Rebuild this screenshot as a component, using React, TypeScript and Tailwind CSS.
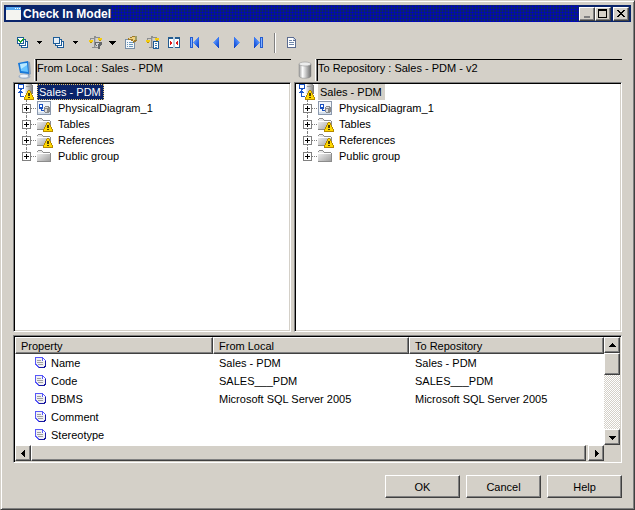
import React, { useState } from "react";

const raised =
  "border border-t-white border-l-white border-r-[#404040] border-b-[#404040] bg-[#d4d0c8] shadow-[inset_-1px_-1px_0_#808080]";
const sunken =
  "border border-t-[#808080] border-l-[#808080] border-r-white border-b-white p-px shadow-[inset_1px_1px_0_#000,inset_-1px_-1px_0_#d4d0c8]";

function Svg({ w = 16, h = 16, children }: { w?: number; h?: number; children: React.ReactNode }) {
  return (
    <svg width={w} height={h} viewBox={`0 0 ${w} ${h}`} shapeRendering="crispEdges" aria-hidden="true" className="block shrink-0">
      {children}
    </svg>
  );
}

function Warning() {
  return (
    <g>
      <path d="M11 6h2v1h1v2h1v2h1v2h1v3H7v-3h1v-2h1V9h1V7h1z" fill="#b48800" />
      <path d="M11 7h2v2h1v2h1v2h1v2H8v-2h1v-2h1V9h1z" fill="#ffd800" />
      <path d="M11 9h2v3h-2zM11 13h2v1h-2z" fill="#504000" />
    </g>
  );
}

function RootIcon() {
  return (
    <Svg w={17}>
      <defs>
        <linearGradient id="cyl">
          <stop offset="0" stopColor="#f4f4f4" />
          <stop offset="1" stopColor="#777" />
        </linearGradient>
      </defs>
      <path d="M9 0h6v1h1v9H8V1h1z" fill="url(#cyl)" />
      <path d="M9 2h6v1H9z" fill="#999" />
      <rect x="1.500" y="0.500" width="5" height="4" fill="#fff" stroke="#174fc0" />
      <path d="M1 0h6v1H1zM3 5h2v1H3zM3 6h1v6h3v1H3zM2 7h3v1H2zM1 8h5v1H1z" fill="#1d58c8" />
      <Warning />
    </Svg>
  );
}

function DiagramIcon() {
  return (
    <Svg>
      <rect x="1.500" y="1.500" width="13" height="13" fill="#f2f6fb" stroke="#8b98ac" />
      <path d="M2 12h12v2H2z" fill="#d3deeb" />
      <rect x="3.500" y="4.500" width="3" height="3" fill="#fff" stroke="#174fc0" />
      <path d="M5 8h1v2h2v1H5zM3 8h4v1H3z" fill="#174fc0" />
      <path d="M9 6h4v1h1v5h-1v1H9v-1H8V7h1z" fill="#8a8a8a" />
      <path d="M9 7h3v1H9zM9 9h2v3H9z" fill="#dcdcdc" />
    </Svg>
  );
}

function FolderIcon({ warn }: { warn?: boolean }) {
  return (
    <Svg w={17}>
      <defs>
        <linearGradient id="fold" x2="1" y2="1">
          <stop offset="0" stopColor="#fafafa" />
          <stop offset="1" stopColor="#a0a0a0" />
        </linearGradient>
      </defs>
      <path d="M1 3h1V2h4v1h1v1h7v1h1v9H1z" fill="#8c8c8c" />
      <path d="M2 3h4v1h1v1h7v8H1V4h1z" fill="url(#fold)" />
      <path d="M1 5h13v1H1z" fill="#fff" />
      {warn && <Warning />}
    </Svg>
  );
}

function PropIcon() {
  return (
    <Svg w={12} h={12}>
      <path d="M0 0h8v1h1v1h1v1h1v7h-1v1H3v-1H2V9H1V8H0z" fill="#5858f8" />
      <path d="M1 1h6v3h3v5H9v1H4V9H3V8H2V7H1z" fill="#f0f0f4" />
      <path d="M8 2h1v1h1v1H8z" fill="#fff" />
      <path d="M2 3h4v1H2zM2 5h6v1H2zM3 7h5v1H3z" fill="#a0a0a0" />
      <path d="M10 4h1v6h-1v1H4v-1h5V9h1z" fill="#1818a0" />
    </Svg>
  );
}

function Stack({ check }: { check?: boolean }) {
  return (
    <Svg>
      <g fill="#fff" stroke="#1c5c98">
        <rect x="5.500" y="6.500" width="6" height="6" />
        <rect x="3.500" y="4.500" width="6" height="6" />
        <rect x="1.500" y="2.500" width="6" height="6" fill={check ? "#fff" : "#e4eef6"} />
      </g>
      {check && <path d="M2 4h1v1h1v1h1V5h1V4h1V3h1v2H7v1H6v1H5v1H4V7H3V6H2z" fill="#18a028" />}
    </Svg>
  );
}

function Scale({ mode }: { mode: "filter" | "doc" }) {
  return (
    <Svg>
      <path d="M6 1h2v1h4v1H8v9h2v1H4v-1h2V4H3v1H2V3h4z" fill="#8c8e90" />
      <path d="M7 3h1v9H7z" fill="#b8babc" />
      <path d="M2 5h2v1h1v1H4v1H2V7H1V6h1zM11 3h2v1h1v1h-1v1h-2V5h-1V4h1z" fill="#c09400" />
      <path d="M1 5h4v2H1zM10 3h4v2h-4z" fill="#f4cc10" />
      {mode === "filter" ? (
        <>
          <path d="M7 7h7v3h-1v1h-1v3h-2v-2H9v-1H8v-1H7z" fill="#66696c" />
          <path d="M8 8h3v1h-1v3H9v-2H8z" fill="#d4d6d8" />
        </>
      ) : (
        <>
          <path d="M8 6h6v8H8z" fill="#1c5c98" />
          <path d="M9 7h4v6H9z" fill="#fff" />
          <path d="M10 8h2v1h-2zM10 10h2v1h-2zM10 12h2v1h-2z" fill="#4080b0" />
        </>
      )}
    </Svg>
  );
}

function PropertiesIcon() {
  return (
    <Svg>
      <path d="M1 4h10v10H1z" fill="#7890a8" />
      <path d="M2 5h8v8H2z" fill="#f4f8fb" />
      <path d="M3 7h1v1H3zM5 7h4v1H5zM3 9h1v1H3zM5 9h4v1H5zM3 11h1v1H3zM5 11h4v1H5z" fill="#6a98bc" />
      <path d="M4 3h2V2h2V1h5v5h-1v1h-2v1H9V6H7V5H4z" fill="#9d7a2c" />
      <path d="M5 3h3V2h3v3h-1v1H9V4H5z" fill="#f1d27c" />
      <path d="M11 1h2v4h-2z" fill="#9c9c6a" />
    </Svg>
  );
}

function CompareIcon() {
  return (
    <Svg>
      <path d="M2 2h12v11H2z" fill="#245c90" />
      <path d="M3 4h4v8H3zM9 4h4v8H9z" fill="#fff" />
      <path d="M4 6h1v1h1v2H5v1H4zM12 6h-1v1h-1v2h1v1h1z" fill="#e01818" />
      <path d="M7 2h2v11H7z" fill="#bed2e2" />
    </Svg>
  );
}

function NavIcon({ dir, bar }: { dir: "l" | "r"; bar?: boolean }) {
  return (
    <Svg>
      <defs>
        <linearGradient id="nav" x2="1" y2="1">
          <stop offset="0" stopColor="#9ac4ff" />
          <stop offset="0.600" stopColor="#2c6cec" />
          <stop offset="1" stopColor="#0c3cbc" />
        </linearGradient>
      </defs>
      <g transform={dir === "r" ? "translate(16 0) scale(-1 1)" : undefined}>
        <path d="M10 2h1v11h-1v-1H9v-1H8v-1H7V9H6V8H5V7h1V6h1V5h1V4h1V3h1z" fill="url(#nav)" transform={bar ? "translate(1 0)" : undefined} />
        {bar && <path d="M3 2h3v11H3z" fill="#245cd0" />}
        {bar && <path d="M4 3h1v9H4z" fill="#80b0ff" />}
      </g>
    </Svg>
  );
}

function ReportIcon() {
  return (
    <Svg>
      <path d="M3 2h7v1h1v1h1v9H3z" fill="#5c6c90" />
      <path d="M4 3h5v3h2v6H4z" fill="#fff" />
      <path d="M9 3h1v1h1v1H9z" fill="#c8d4e8" />
      <path d="M5 5h3v1H5zM5 7h5v1H5zM5 9h5v1H5z" fill="#7088ac" />
    </Svg>
  );
}

function Arrow({ dir }: { dir: "up" | "down" | "left" | "right" }) {
  const d = {
    up: "M3 1h1v1h1v1h1v1h1v1H0V4h1V3h1V2h1z",
    down: "M0 2h7v1H6v1H5v1H4v1H3V5H2V4H1V3H0z",
    left: "M4 0h1v7H4V6H3V5H2V4H1V3h1V2h1V1h1z",
    right: "M2 0h1v1h1v1h1v1h1v1H5v1H4v1H3v1H2z",
  }[dir];
  return (
    <Svg w={7} h={7}>
      <path d={d} />
    </Svg>
  );
}

function Tool({ label, children }: { label: string; children: React.ReactNode }) {
  return (
    <button aria-label={label} className="flex h-5 w-5 items-center justify-center">
      {children}
    </button>
  );
}

function Drop({ label, wide }: { label: string; wide?: boolean }) {
  return (
    <button aria-label={label} className="flex h-5 w-4 items-center pl-[3px]">
      {wide ? (
        <Svg w={7} h={4}>
          <path d="M0 0h7v1H6v1H5v1H4v1H3V3H2V2H1V1H0z" />
        </Svg>
      ) : (
        <Svg w={5} h={3}>
          <path d="M0 0h5v1H4v1H3v1H2V2H1V1H0z" />
        </Svg>
      )}
    </button>
  );
}

function Tree({ label, selected }: { label: string; selected: boolean }) {
  const items = [
    { name: "PhysicalDiagram_1", icon: <DiagramIcon /> },
    { name: "Tables", icon: <FolderIcon warn /> },
    { name: "References", icon: <FolderIcon warn /> },
    { name: "Public group", icon: <FolderIcon /> },
  ];
  return (
    <div role="tree" aria-label={label} className={`${sunken} mt-px bg-white`}>
      <div role="treeitem" aria-selected={selected} className="flex h-4 items-center pl-0.5">
        <RootIcon />
        <span
          className={
            selected
              ? "ml-[3px] h-4 border border-dotted border-[#e0c070] bg-[#0a246a] pr-0.5 pl-px leading-[14px] text-white"
              : "ml-[3px] h-4 border border-[#d4d0c8] bg-[#d4d0c8] pr-0.5 pl-px leading-[14px]"
          }
        >
          Sales - PDM
        </span>
      </div>
      {items.map((item, i) => (
        <div key={item.name} role="treeitem" className="flex h-4 items-center pl-[7px]">
          <div className="flex h-4 flex-col items-center">
            <span className="h-1 border-l border-dotted border-[#808080]" />
            <button aria-label={`Expand ${item.name}`} className="block shrink-0">
              <Svg w={9} h={9}>
                <rect x="0.500" y="0.500" width="8" height="8" fill="#fff" stroke="#808080" />
                <path d="M2 4h5v1H2zM4 2h1v5H4z" />
              </Svg>
            </button>
            {i < 3 && <span className="h-[3px] border-l border-dotted border-[#808080]" />}
          </div>
          <span className="w-[5px] border-t border-dotted border-[#808080]" />
          <span className="flex w-[22px] shrink-0">{item.icon}</span>
          <span>{item.name}</span>
        </div>
      ))}
    </div>
  );
}

function Monitor() {
  return (
    <svg width="16" height="20" viewBox="0 0 16 20" aria-hidden="true" className="block">
      <ellipse cx="8.500" cy="16.500" rx="6" ry="2.500" fill="#a4b4c8" />
      <ellipse cx="8" cy="16" rx="4" ry="1.500" fill="#edf3fa" />
      <path d="m11 1 3 1 1 12-3 2z" fill="#8ca0b8" />
      <path d="m2 3 10-2 1 13-9-1z" fill="#1878d8" />
      <path d="m4 4 7-1 1 9-7-1z" fill="#68c4ff" />
      <path d="m4 4 7-1v2l-6 4z" fill="#b8e8ff" />
    </svg>
  );
}

function Cylinder() {
  return (
    <svg width="16" height="20" viewBox="0 0 16 20" aria-hidden="true" className="block">
      <defs>
        <linearGradient id="repo">
          <stop offset="0" stopColor="#999" />
          <stop offset="0.300" stopColor="#fff" />
          <stop offset="1" stopColor="#6c6c6c" />
        </linearGradient>
      </defs>
      <path d="M2 4v12c0 3 12 3 12 0V4z" fill="url(#repo)" stroke="#888" strokeWidth="0.500" />
      <ellipse cx="8" cy="4" rx="6" ry="2" fill="#ececec" stroke="#888" strokeWidth="0.500" />
    </svg>
  );
}

function Source({ id, label, value, icon }: { id: string; label: string; value: string; icon: React.ReactNode }) {
  return (
    <div className="flex h-[22px] items-center">
      <label htmlFor={id} aria-label={label} className="flex w-[22px] shrink-0 justify-center">
        {icon}
      </label>
      <input
        id={id}
        readOnly
        value={value}
        className="h-[22px] min-w-0 flex-1 border-t border-l border-t-black border-l-[#808080] bg-[#d4d0c8] pb-1.5 pl-px shadow-[inset_1px_0_0_#000,-1px_0_0_#fff] outline-none"
      />
    </div>
  );
}

const rows = [
  ["Name", "Sales - PDM", "Sales - PDM"],
  ["Code", "SALES___PDM", "SALES___PDM"],
  ["DBMS", "Microsoft SQL Server 2005", "Microsoft SQL Server 2005"],
  ["Comment", "", ""],
  ["Stereotype", "", ""],
];

const caption = `${raised} flex h-[14px] w-4 items-center justify-center`;
const scroll = `${raised} flex h-4 w-4 shrink-0 items-center justify-center`;
const dialogButton = `${raised} h-[23px] w-[75px]`;

export default function App() {
  const [row, setRow] = useState(-1);
  return (
    <main className="flex min-h-screen flex-col border border-t-[#d4d0c8] border-r-[#404040] border-b-[#404040] border-l-[#d4d0c8] bg-[#d4d0c8] font-['Liberation_Sans',Arial,sans-serif] text-[11px] leading-4 text-black shadow-[inset_1px_1px_0_#fff,inset_-1px_-1px_0_#808080]">
      <header className="mx-[3px] mt-1 flex h-[17px] items-center bg-[#0a246a] pr-0.5 pl-0.5 text-white">
        <svg width="15" height="13" viewBox="0 0 15 13" shapeRendering="crispEdges" aria-hidden="true" className="shrink-0">
          <path d="M0 0h15v13H0z" fill="#f4f4f0" />
          <path d="M0 0h15v3H0z" fill="#58a8f0" />
          <path d="M9 1h1v1H9zM11 1h1v1h-1zM13 1h1v1h-1z" fill="#fff" />
        </svg>
        <h1 className="pl-0.5 text-xs font-bold whitespace-nowrap">Check In Model</h1>
        <span className="h-full flex-1 bg-[radial-gradient(#0000cc_45%,transparent_50%)] bg-[length:3px_3px]" />
        <button aria-label="Minimize" className={caption}>
          <Svg w={10} h={9}>
            <path d="M2 7h6v2H2z" fill="#808080" />
          </Svg>
        </button>
        <button aria-label="Maximize" className={caption}>
          <Svg w={10} h={9}>
            <path d="M0 0h9v9H0zM1 2v6h7V2z" fillRule="evenodd" />
          </Svg>
        </button>
        <button aria-label="Close" className={`${caption} ml-0.5`}>
          <Svg w={8} h={7}>
            <path d="M0 0h2v1h1v1h2V1h1V0h2v1H7v1H6v1H5v1h1v1h1v1h1v1H6V6H5V5H3v1H2v1H0V6h1V5h1V4h1V3H2V2H1V1H0z" />
          </Svg>
        </button>
      </header>

      <div role="toolbar" className="flex h-[37px] items-center pt-1 pl-[13px]">
        <Tool label="Show objects"><Stack check /></Tool>
        <Drop label="Show objects options" />
        <Tool label="Expand"><Stack /></Tool>
        <Drop label="Expand options" />
        <Tool label="Filter differences"><Scale mode="filter" /></Tool>
        <Drop label="Filter options" wide />
        <div className="flex gap-px">
          <Tool label="Properties"><PropertiesIcon /></Tool>
          <Tool label="Comparison report"><Scale mode="doc" /></Tool>
          <Tool label="Compare"><CompareIcon /></Tool>
          <Tool label="First"><NavIcon dir="l" bar /></Tool>
          <Tool label="Previous"><NavIcon dir="l" /></Tool>
          <Tool label="Next"><NavIcon dir="r" /></Tool>
          <Tool label="Last"><NavIcon dir="r" bar /></Tool>
        </div>
        <span className="mx-1.5 h-5 w-0.5 border-l border-[#808080] bg-white" />
        <Tool label="Report"><ReportIcon /></Tool>
      </div>

      <section className="mx-3 grid flex-1 grid-cols-[278fr_328fr] grid-rows-[22px_1fr] gap-x-[3px]">
        <Source id="local" label="From" value="From Local : Sales - PDM" icon={<Monitor />} />
        <Source id="repo-name" label="To" value="To Repository : Sales - PDM - v2" icon={<Cylinder />} />
        <Tree label="From Local" selected />
        <Tree label="To Repository" selected={false} />
      </section>

      <section className={`${sunken} mx-3 mt-[3px] bg-white`}>
        <div className="flex">
          <div className="flex-1 pb-px">
            <table className="w-full table-fixed border-collapse text-left">
              <colgroup>
                <col className="w-[198px]" />
                <col className="w-[196px]" />
                <col />
              </colgroup>
              <thead>
                <tr>
                  {["Property", "From Local", "To Repository"].map((name) => (
                    <th key={name} scope="col" className="p-0 font-normal">
                      <div className={`${raised} h-[17px] pl-[5px] leading-4`}>{name}</div>
                    </th>
                  ))}
                </tr>
              </thead>
              <tbody>
                {rows.map(([name, from, to], i) => (
                  <tr key={name} onClick={() => setRow(i)} className={row === i ? "h-[18px] bg-[#d4d0c8]" : "h-[18px]"}>
                    <td className="p-0 pl-5">
                      <span className="flex items-center gap-1">
                        <PropIcon />
                        {name}
                      </span>
                    </td>
                    <td className="p-0 pl-1.5">{from}</td>
                    <td className="p-0 pl-1.5">{to}</td>
                  </tr>
                ))}
              </tbody>
            </table>
          </div>
          <div className="flex w-4 flex-col bg-[conic-gradient(#fff_25%,#d4d0c8_0_50%,#fff_0_75%,#d4d0c8_0)] bg-[length:2px_2px]">
            <button aria-label="Scroll up" className={scroll}><Arrow dir="up" /></button>
            <div className={`${raised} h-[22px]`} />
            <button aria-label="Scroll down" className={`${scroll} mt-auto`}><Arrow dir="down" /></button>
          </div>
        </div>
        <div className="flex bg-[#d4d0c8]">
          <button aria-label="Scroll left" className={scroll}><Arrow dir="left" /></button>
          <div className={`${raised} mr-0.5 flex-1`} />
          <button aria-label="Scroll right" className={`${scroll} mr-4`}><Arrow dir="right" /></button>
        </div>
      </section>

      <footer className="flex justify-end gap-1.5 px-3 pt-3 pb-[11px]">
        <button className={dialogButton}>OK</button>
        <button className={dialogButton}>Cancel</button>
        <button className={dialogButton}>Help</button>
      </footer>
    </main>
  );
}
